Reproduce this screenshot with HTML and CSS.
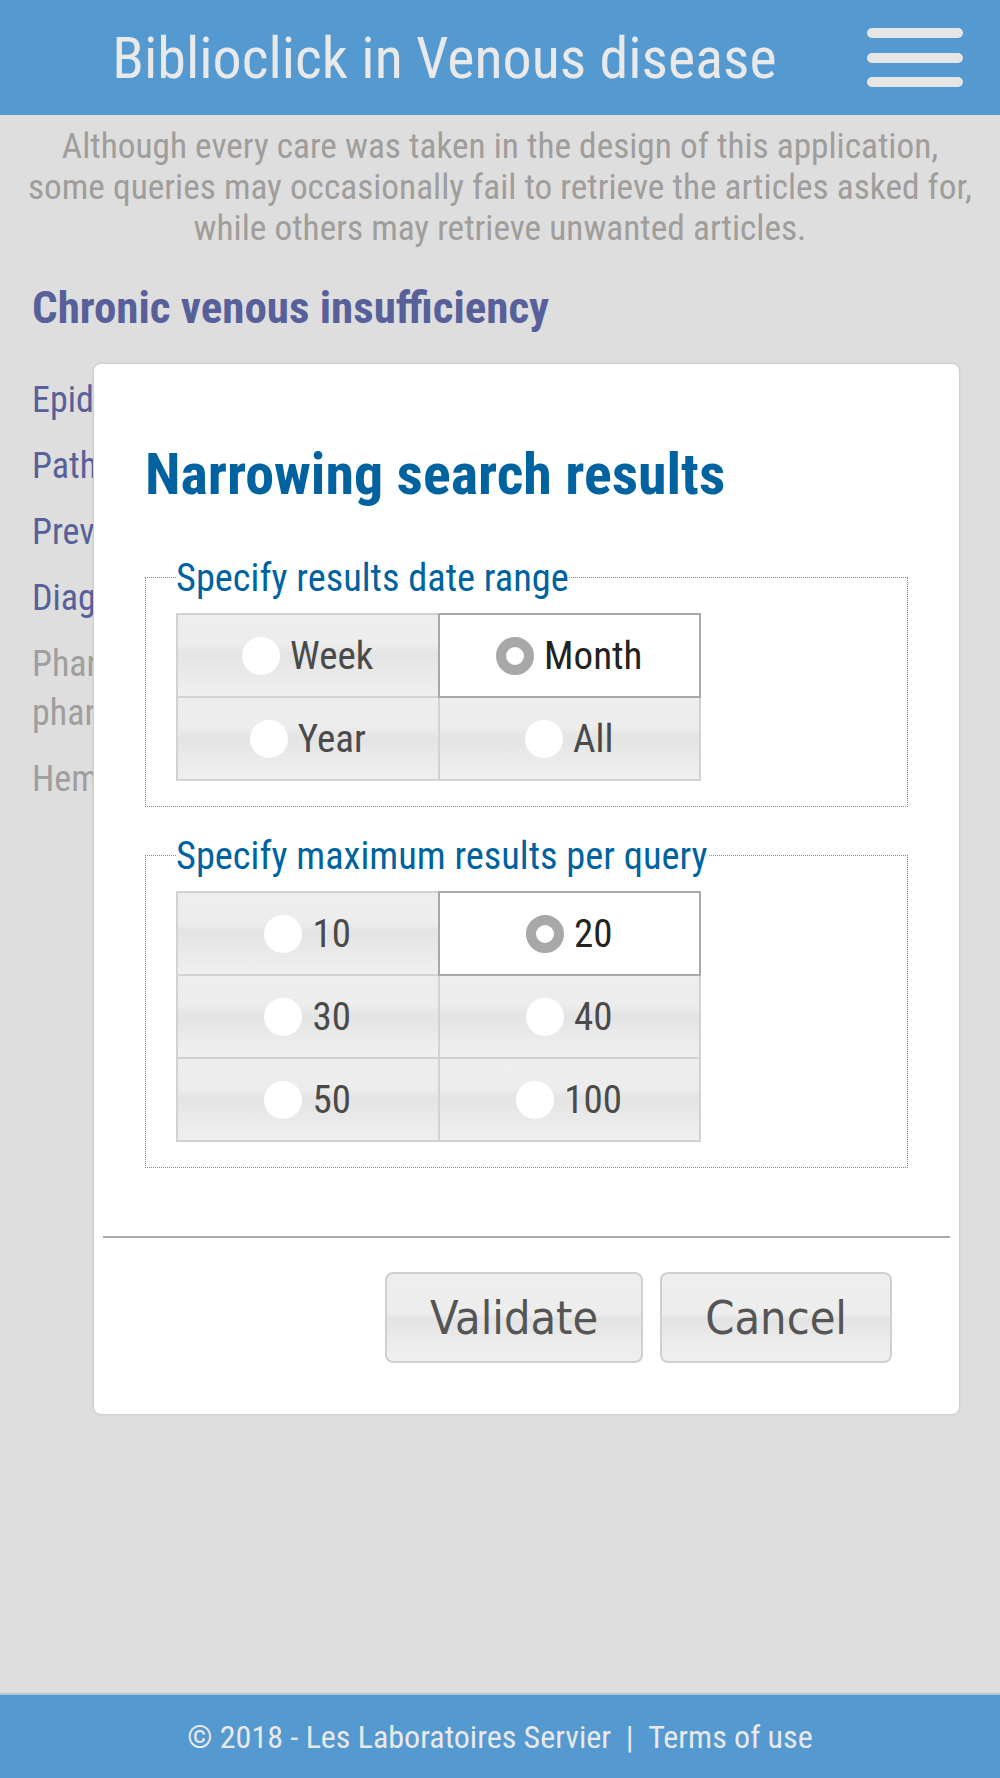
FILE: index.html
```html
<!DOCTYPE html>
<html lang="en">
<head>
<meta charset="utf-8">
<title>Biblioclick in Venous disease</title>
<link rel="stylesheet" href="styles.css">
</head>
<body>
<div class="page">
  <header class="topbar">
    <h1 class="app-title">Biblioclick in Venous disease</h1>
    <button class="menu-btn" aria-label="Menu">
      <span class="bar"></span><span class="bar"></span><span class="bar"></span>
    </button>
  </header>

  <main class="content">
    <p class="disclaimer">Although every care was taken in the design of this application, some queries may occasionally fail to retrieve the articles asked for, while others may retrieve unwanted articles.</p>
    <h2 class="section-title">Chronic venous insufficiency</h2>
    <ul class="topics">
      <li class="topic">Epidemiology</li>
      <li class="topic">Pathophysiology</li>
      <li class="topic">Prevention</li>
      <li class="topic">Diagnosis</li>
      <li class="topic topic-off">Pharmacological treatment<br>pharmacological</li>
      <li class="topic topic-off">Hemorrhoidal disease</li>
    </ul>
  </main>

  <footer class="footer">© 2018 - Les Laboratoires Servier&nbsp;&nbsp;|&nbsp;&nbsp;Terms of use</footer>

  <div class="dialog">
    <h2 class="dialog-title">Narrowing search results</h2>
    <fieldset class="group">
      <legend class="legend">Specify results date range</legend>
      <div class="choices">
        <label class="choice"><span class="dot"></span>Week</label>
        <label class="choice on"><span class="dot"></span>Month</label>
        <label class="choice"><span class="dot"></span>Year</label>
        <label class="choice"><span class="dot"></span>All</label>
      </div>
    </fieldset>
    <fieldset class="group group-last">
      <legend class="legend">Specify maximum results per query</legend>
      <div class="choices">
        <label class="choice"><span class="dot"></span>10</label>
        <label class="choice on"><span class="dot"></span>20</label>
        <label class="choice"><span class="dot"></span>30</label>
        <label class="choice"><span class="dot"></span>40</label>
        <label class="choice"><span class="dot"></span>50</label>
        <label class="choice"><span class="dot"></span>100</label>
      </div>
    </fieldset>
    <div class="dialog-foot">
      <button class="btn">Validate</button>
      <button class="btn">Cancel</button>
    </div>
  </div>
</div>
</body>
</html>
```

FILE: styles.css
```css
* { box-sizing: border-box; }
html, body { margin: 0; padding: 0; }
body {
  background: #dedede;
  font-family: "Roboto Condensed", Roboto, sans-serif;
  font-stretch: condensed;
}
.page {
  position: relative;
  min-height: 1778px;
  display: flex;
  flex-direction: column;
}
.topbar {
  height: 115px;
  background: #5499cf;
  display: flex;
  align-items: center;
  padding: 0 37px 0 0;
}
.app-title {
  flex: 1;
  margin: 0;
  padding-left: 22px;
  text-align: center;
  color: #e9e9e9;
  font-weight: 400;
  font-size: 58px;
}
.menu-btn {
  width: 96px;
  height: 59px;
  padding: 0;
  border: 0;
  background: transparent;
  display: flex;
  flex-direction: column;
  justify-content: space-between;
}
.bar {
  display: block;
  height: 10px;
  border-radius: 5px;
  background: #e6e6e6;
}
.content {
  flex: 1;
  padding: 0 32px;
}
.disclaimer {
  margin: 0 -8px;
  padding-top: 11px;
  text-align: center;
  color: #a09d9b;
  font-size: 35.3px;
  line-height: 41px;
}
.section-title {
  margin: 33px 0 42px;
  color: #58609a;
  font-weight: 700;
  font-size: 45px;
  line-height: 52px;
}
.topics {
  list-style: none;
  margin: 0;
  padding: 0;
}
.topic {
  color: #58609a;
  font-size: 36px;
  line-height: 49px;
  margin-bottom: 17px;
}
.topic-off { color: #a09e9e; }
.footer {
  height: 85px;
  background: #5499cf;
  border-top: 2px solid #b9c6d2;
  color: #e9e9e9;
  font-size: 32px;
  display: flex;
  align-items: center;
  justify-content: center;
}
.dialog {
  position: absolute;
  left: 93px;
  top: 363px;
  width: 867px;
  background: #fff;
  border: 1px solid #cfcfcf;
  border-radius: 8px;
  box-shadow: 0 0 2px rgba(0, 0, 0, 0.08);
  padding: 76px 51px 51px;
}
.dialog-title {
  margin: 0 0 47px;
  color: #0063a0;
  font-weight: 700;
  font-size: 58px;
  line-height: 68px;
}
.group {
  margin: 0 0 26px;
  border: 1px dotted #8a8a8a;
  padding: 0 30px 25px;
}
.group-last { margin-bottom: 68px; }
.legend {
  padding: 0;
  color: #0063a0;
  font-size: 38.4px;
  line-height: 45px;
}
.choices {
  width: 525px;
  margin-top: 13px;
  display: grid;
  grid-template-columns: 1fr 1fr;
  gap: 2px;
  background: #d2d2d2;
  border: 2px solid #d2d2d2;
}
.choice {
  height: 81px;
  display: flex;
  align-items: center;
  justify-content: center;
  gap: 10px;
  font-size: 39px;
  color: #4a4a4a;
  background: linear-gradient(#eeeeee 0%, #ededed 36%, #e4e4e4 48%, #e9e9e9 70%, #f0f0f0 100%);
}
.dot {
  width: 38px;
  height: 38px;
  border-radius: 50%;
  background: #fff;
}
.choice.on {
  background: #fff;
  color: #222;
  outline: 2px solid #a8a8a8;
}
.choice.on .dot {
  border: 10px solid #a8a8a8;
}
.dialog-foot {
  border-top: 2px solid #aaa;
  margin: 0 -42px;
  padding: 34px 58px 0;
  display: flex;
  justify-content: flex-end;
  gap: 17px;
}
.btn {
  height: 91px;
  padding: 0 43px;
  border: 2px solid #d0d0d0;
  border-radius: 8px;
  background: linear-gradient(#eeeeee 0%, #ededed 46%, #e3e3e3 52%, #ebebeb 75%, #efefef 100%);
  color: #555;
  font-family: "DejaVu Sans Condensed", "DejaVu Sans", sans-serif;
  font-size: 46.5px;
}
```
